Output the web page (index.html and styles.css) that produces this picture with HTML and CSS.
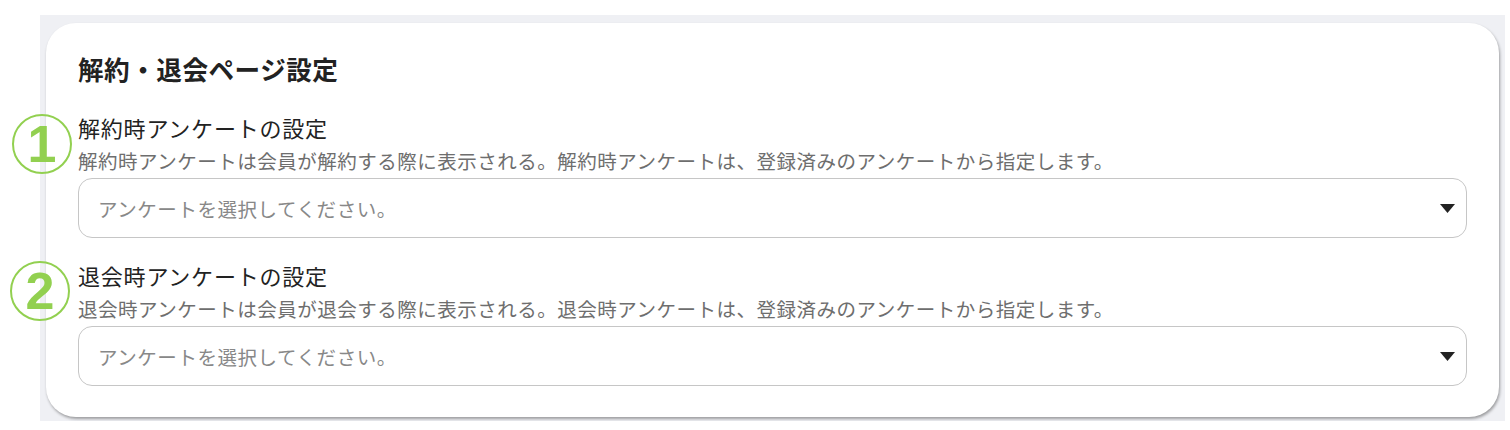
FILE: index.html
```html
<!DOCTYPE html>
<html lang="ja">
  <head>
    <meta charset="UTF-8" />
    <meta name="viewport" content="width=device-width, initial-scale=1.0" />
    <title>解約・退会ページ設定</title>
    <link rel="stylesheet" href="styles.css">
  </head>
  <body>
    <div class="page">
      <div class="card">
        <h2 class="card-title">解約・退会ページ設定</h2>

        <!-- cancel survey -->
        <div class="field">
          <span class="mark">1</span>
          <div class="label">解約時アンケートの設定</div>
          <div class="help">解約時アンケートは会員が解約する際に表示される。解約時アンケートは、登録済みのアンケートから指定します。</div>
          <div class="select">
            <span class="placeholder">アンケートを選択してください。</span>
            <svg class="caret" width="15" height="9" viewBox="0 0 15 9"><path d="M0 0h15L7.5 9z" fill="#222"/></svg>
          </div>
        </div>

        <!-- withdraw survey -->
        <div class="field">
          <span class="mark">2</span>
          <div class="label">退会時アンケートの設定</div>
          <div class="help">退会時アンケートは会員が退会する際に表示される。退会時アンケートは、登録済みのアンケートから指定します。</div>
          <div class="select">
            <span class="placeholder">アンケートを選択してください。</span>
            <svg class="caret" width="15" height="9" viewBox="0 0 15 9"><path d="M0 0h15L7.5 9z" fill="#222"/></svg>
          </div>
        </div>
      </div>
    </div>
  </body>
</html>
```

FILE: styles.css
```css
* {
  box-sizing: border-box;
}

body {
  margin: 0;
  font-family: "Noto Sans CJK JP", "Noto Sans", sans-serif;
  color: #222;
  background-color: #fff;
}

.page {
  margin: 15px 0 0 40px;
  width: 1465px;
  padding: 8px 6px 4px;
  background-color: #eff0f4;
}

.card {
  background-color: #fff;
  border-radius: 30px;
  box-shadow: 1px 2px 3px rgba(0, 0, 0, 0.35);
  padding: 28px 32px 31px;
}

.card-title {
  margin: 0 0 24px;
  font-size: 25.6px;
  line-height: 36px;
  font-weight: 700;
  letter-spacing: 0.5px;
  color: #222;
}

.field {
  position: relative;
}

.field + .field {
  margin-top: 21px;
}

.mark {
  position: absolute;
  left: -66px;
  top: 3px;
  width: 60px;
  height: 60px;
  border: 2.5px solid #92d050;
  border-radius: 50%;
  color: #92d050;
  font-family: "Liberation Sans", sans-serif;
  font-weight: 700;
  font-size: 52px;
  line-height: 56px;
  text-align: center;
}

.field + .field .mark {
  left: -68px;
  top: 2px;
}

.label {
  font-size: 22px;
  line-height: 32px;
  letter-spacing: 0.8px;
  color: #222;
}

.help {
  margin-top: 4px;
  font-size: 19.5px;
  line-height: 28px;
  letter-spacing: 0.5px;
  color: #6e6e6e;
}

.select {
  margin-top: 3px;
  height: 60px;
  border: 1px solid #c6c6c6;
  border-radius: 14px;
  display: flex;
  align-items: center;
  justify-content: space-between;
  padding: 0 11px 0 19px;
}

.placeholder {
  font-size: 19.5px;
  letter-spacing: 0.55px;
  color: #888;
}

.caret {
  display: block;
}
```
